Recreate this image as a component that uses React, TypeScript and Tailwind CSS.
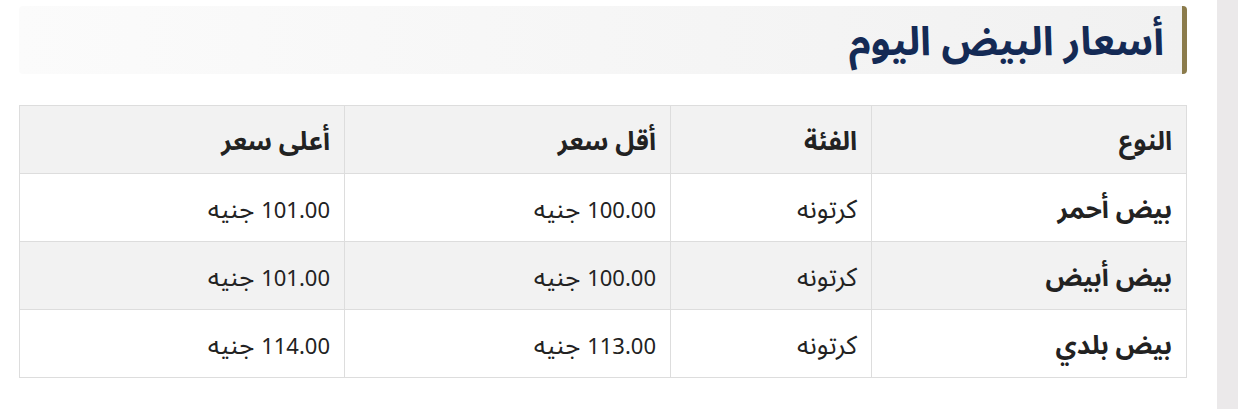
import React from 'react';

const rows = [
  { type: 'بيض أحمر', cat: 'كرتونه', min: '100.00', max: '101.00' },
  { type: 'بيض أبيض', cat: 'كرتونه', min: '100.00', max: '101.00' },
  { type: 'بيض بلدي', cat: 'كرتونه', min: '113.00', max: '114.00' },
];

// Price cell: the number is set smaller than the Arabic word next to it
function Price({ value }: { value: string }) {
  return (
    <>
      <span className="text-[22px]">{value}</span> جنيه
    </>
  );
}

export default function App() {
  return (
    <div
      dir="rtl"
      className="flex h-[409px] w-full bg-white"
      style={{ fontFamily: '"Noto Sans", "Noto Sans Arabic", "DejaVu Sans", sans-serif' }}
    >
      {/* scrollbar strip */}
      <div className="w-[21px] shrink-0 bg-[#ebe9ea]" />

      <div className="flex-1 pr-[30px] pl-[19px] pt-[6px]">
        {/* heading */}
        <div className="flex h-[68px] items-center rounded-[4px] border-r-[5px] border-[#8b7b4b] bg-gradient-to-l from-[#f1f1f1] to-[#fbfbfb] pr-[18px]">
          <h2 className="text-[40px] font-bold leading-none text-[#142a55]">أسعار البيض اليوم</h2>
        </div>

        {/* table */}
        <table className="mt-[31px] w-full border-collapse text-[26px] leading-none text-[#222]">
          <thead>
            <tr className="h-[68px] bg-[#f2f2f2]">
              <th className="w-[315px] border border-[#dddddd] px-[14px] text-right font-bold">النوع</th>
              <th className="w-[201px] border border-[#dddddd] px-[14px] text-right font-bold">الفئة</th>
              <th className="w-[326px] border border-[#dddddd] px-[14px] text-right font-bold">أقل سعر</th>
              <th className="border border-[#dddddd] px-[14px] text-right font-bold">أعلى سعر</th>
            </tr>
          </thead>
          <tbody>
            {rows.map((r, i) => (
              <tr key={r.type} className={i % 2 === 1 ? 'h-[68px] bg-[#f2f2f2]' : 'h-[68px] bg-white'}>
                <td className="border border-[#dddddd] px-[14px] font-bold">{r.type}</td>
                <td className="border border-[#dddddd] px-[14px]">{r.cat}</td>
                <td className="border border-[#dddddd] px-[14px]"><Price value={r.min} /></td>
                <td className="border border-[#dddddd] px-[14px]"><Price value={r.max} /></td>
              </tr>
            ))}
          </tbody>
        </table>
      </div>
    </div>
  );
}
